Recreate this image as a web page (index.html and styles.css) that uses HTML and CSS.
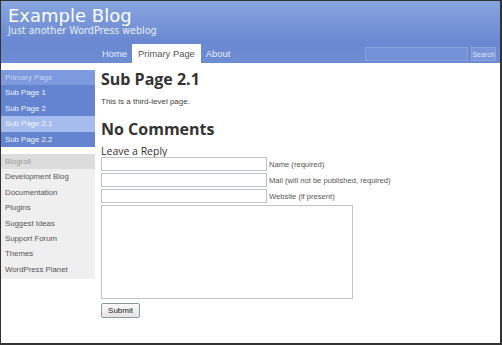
FILE: index.html
```html
<!DOCTYPE html>
<html lang="en">
<head>
  <meta charset="UTF-8">
  <title>Example Blog</title>
  <link rel="stylesheet" href="styles.css">
</head>
<body>
  <div id="page">
    <div id="header">
      <div id="blog-title">
        <h1>Example Blog</h1>
        <p>Just another WordPress weblog</p>
      </div>
      <div id="nav">
        <ul class="tabs">
          <li><a href="#">Home</a></li>
          <li class="current"><a href="#">Primary Page</a></li>
          <li><a href="#">About</a></li>
        </ul>
        <form class="search">
          <input type="text" class="search-box">
          <button type="button" class="search-btn">Search</button>
        </form>
      </div>
    </div>

    <div id="wrap">
      <div id="sidebar">
        <ul class="pages">
          <li class="heading">Primary Page</li>
          <li>Sub Page 1</li>
          <li>Sub Page 2</li>
          <li class="sub current">Sub Page 2.1</li>
          <li class="sub">Sub Page 2.2</li>
        </ul>
        <ul class="blogroll">
          <li class="heading">Blogroll</li>
          <li>Development Blog</li>
          <li>Documentation</li>
          <li>Plugins</li>
          <li>Suggest Ideas</li>
          <li>Support Forum</li>
          <li>Themes</li>
          <li>WordPress Planet</li>
        </ul>
      </div>

      <div id="content">
        <h2>Sub Page 2.1</h2>
        <p class="entry">This is a third-level page.</p>
        <h2 class="comments">No Comments</h2>
        <h3>Leave a Reply</h3>
        <div class="field"><input type="text"><label>Name (required)</label></div>
        <div class="field"><input type="text"><label>Mail (will not be published, required)</label></div>
        <div class="field"><input type="text"><label>Website (if present)</label></div>
        <textarea></textarea>
        <button type="button" class="submit">Submit</button>
      </div>
    </div>
  </div>
</body>
</html>
```

FILE: styles.css
```css
html, body {
  margin: 0;
  padding: 0;
  height: 100%;
}

body {
  font-family: "Liberation Sans", Arial, sans-serif;
  background: #fff;
  color: #444;
}

#page {
  height: 345px;
  box-sizing: border-box;
  border: 1px solid #333;
  border-right-width: 2px;
  border-bottom-width: 2px;
  overflow: hidden;
}

#header {
  background: linear-gradient(#89a6df, #6988d1 65%, #6d8cd3);
  height: 62px;
  display: flex;
  flex-direction: column;
}

#blog-title {
  padding: 5px 0 0 7px;
  height: 43px;
  box-sizing: border-box;
}

#blog-title h1 {
  margin: 0;
  font-family: "DejaVu Sans", Verdana, sans-serif;
  font-weight: normal;
  font-size: 18px;
  line-height: 20px;
  color: #fff;
}

#blog-title p {
  margin: 0;
  font-family: "DejaVu Sans", Verdana, sans-serif;
  font-size: 9.6px;
  line-height: 9px;
  color: #e8eefb;
}

#nav {
  display: flex;
  align-items: flex-end;
  height: 19px;
}

.tabs {
  list-style: none;
  margin: 0 0 0 96px;
  padding: 0;
  display: flex;
  height: 19px;
}

.tabs li a {
  display: block;
  padding: 0 5px;
  line-height: 19px;
  font-size: 9.4px;
  color: #e6ecfa;
  text-decoration: none;
}

.tabs li.current a {
  background: #fff;
  color: #555;
  padding: 0 6px;
}

.search {
  margin: 0 0 2px auto;
  display: flex;
  gap: 3px;
  padding-right: 4px;
}

.search-box {
  width: 103px;
  height: 14px;
  box-sizing: border-box;
  border: 1px solid #86a1dc;
  background: #7391d7;
  padding: 0;
}

.search-btn {
  width: 25px;
  height: 14px;
  padding: 0;
  border: 1px solid #8aa4de;
  background: #7a96d8;
  color: #dce5f8;
  font-family: "Liberation Sans", Arial, sans-serif;
  font-size: 7px;
}

#wrap {
  display: flex;
  padding-top: 7px;
}

#sidebar {
  width: 94px;
  flex-shrink: 0;
}

#sidebar ul {
  list-style: none;
  margin: 0;
  padding: 0;
}

#sidebar li {
  font-size: 7.8px;
  line-height: 15.4px;
  padding-left: 4px;
}

.pages li {
  background: #6483d1;
  color: #f4f7fd;
}

.pages li.heading {
  background: #7c9add;
  color: #c5d3f1;
  font-size: 9px;
  line-height: 17px;
}

.pages li.sub {
  padding-left: 12px;
}

.pages li.current {
  background: #a7bcee;
}

.blogroll {
  margin-top: 7px !important;
  background: #efefef;
  padding-bottom: 2px !important;
}

.blogroll li {
  color: #555;
}

.blogroll li.heading {
  background: #dcdcdc;
  color: #9a9a9a;
  font-size: 9px;
  line-height: 18px;
}

#content {
  padding-left: 6px;
  flex: 1;
}

#content h2 {
  margin: 0;
  font-family: "Open Sans", "DejaVu Sans", sans-serif;
  font-weight: 700;
  font-size: 16px;
  line-height: 19px;
  color: #333;
}

.entry {
  margin: 8px 0 0;
  font-size: 8px;
  color: #444;
}

#content h2.comments {
  margin-top: 14px;
}

#content h3 {
  margin: 7px 0 0;
  font-family: "Open Sans", "DejaVu Sans", sans-serif;
  font-weight: normal;
  font-size: 10.5px;
  line-height: 11px;
  color: #333;
}

.field {
  display: flex;
  align-items: center;
  margin-bottom: 2px;
}

.field input {
  width: 166px;
  height: 14px;
  box-sizing: border-box;
  border: 1px solid #bfc4cc;
  margin: 0 2px 0 0;
  padding: 0;
}

.field label {
  font-size: 7.6px;
  color: #555;
}

textarea {
  display: block;
  width: 252px;
  height: 94px;
  box-sizing: border-box;
  border: 1px solid #c4c4c4;
  margin: 0;
  resize: none;
}

.submit {
  margin-top: 2px;
  width: 39px;
  height: 15px;
  padding: 0;
  border: 1px solid #8a9a9a;
  border-radius: 2px;
  background: linear-gradient(#fafafa, #e4e4e4);
  font-family: "Liberation Sans", Arial, sans-serif;
  font-size: 8px;
  color: #222;
}
```
